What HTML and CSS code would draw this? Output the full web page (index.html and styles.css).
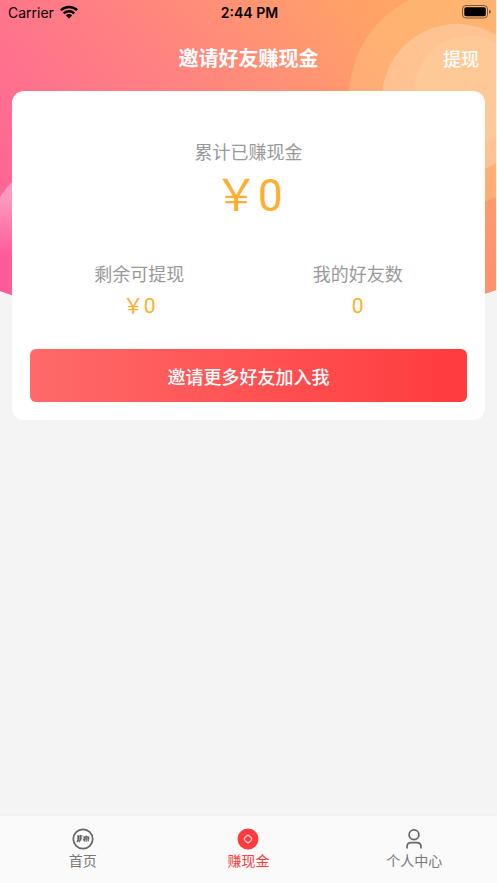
FILE: index.html
```html
<!DOCTYPE html>
<html lang="zh-CN">
<head>
<meta charset="utf-8">
<meta name="viewport" content="width=device-width, initial-scale=1">
<title>邀请好友赚现金</title>
<link rel="stylesheet" href="styles.css">
</head>
<body>
<div class="app">
  <svg class="backdrop" viewBox="0 0 497 340" preserveAspectRatio="none" aria-hidden="true">
    <defs>
      <linearGradient id="sky" gradientUnits="userSpaceOnUse" x1="30" y1="260" x2="370" y2="-10">
        <stop offset="0" stop-color="#ff6298"/>
        <stop offset="0.5" stop-color="#ff8182"/>
        <stop offset="1" stop-color="#ffa565"/>
      </linearGradient>
      <linearGradient id="dusk" gradientUnits="userSpaceOnUse" x1="0" y1="140" x2="0" y2="300">
        <stop offset="0" stop-color="#ff9270" stop-opacity="0"/>
        <stop offset="1" stop-color="#ff9270"/>
      </linearGradient>
      <linearGradient id="bubble" gradientUnits="userSpaceOnUse" x1="0" y1="175" x2="0" y2="255">
        <stop offset="0" stop-color="#ffa2c2"/>
        <stop offset="0.3" stop-color="#ff98bc"/>
        <stop offset="1" stop-color="#ff5b98"/>
      </linearGradient>
      <clipPath id="arch"><path d="M0 0H496V290Q248 380 0 291Z"/></clipPath>
    </defs>
    <g clip-path="url(#arch)">
      <rect width="496" height="340" fill="url(#sky)"/>
      <rect x="440" y="140" width="56" height="170" fill="url(#dusk)"/>
      <path d="M0 197Q18 170 42 164V320H0Z" fill="url(#bubble)"/>
      <circle cx="457" cy="97" r="108" fill="#ffc984" fill-opacity="0.4"/>
      <circle cx="457" cy="99" r="75" fill="#ffd6b8" fill-opacity="0.45"/>
      <circle cx="469" cy="90" r="54" fill="#ffd2a0" fill-opacity="0.4"/>
    </g>
  </svg>

  <div class="status">
    <div class="carrier">
      <span>Carrier</span>
      <svg width="18" height="14" viewBox="0 0 18 14" aria-hidden="true">
        <g fill="none" stroke="#000" stroke-width="2.5">
          <path d="M.9 5.2a11.7 11.7 0 0 1 16.2 0"/>
          <path d="M3.8 8.4a7.5 7.5 0 0 1 10.4 0"/>
        </g>
        <path d="M9 13.4 5.9 10.4a4.4 4.4 0 0 1 6.2 0Z"/>
      </svg>
    </div>
    <span class="clock">2:44 PM</span>
    <svg class="battery" width="29" height="14" viewBox="0 0 29 14" aria-hidden="true">
      <rect x=".5" y=".5" width="25" height="12.5" rx="3.5" fill="none" stroke="#000" stroke-opacity=".5"/>
      <rect x="2.3" y="2.3" width="21.5" height="9" rx="1.8"/>
      <path d="M27 4.8q2 .6 2 2t-2 2Z" fill-opacity=".5"/>
    </svg>
  </div>

  <header class="header">
    <h1 class="title">邀请好友赚现金</h1>
    <button class="withdraw" type="button">提现</button>
  </header>

  <main class="main">
    <section class="card">
      <div class="total">
        <span class="label">累计已赚现金</span>
        <span class="amount">￥0</span>
      </div>
      <div class="stats">
        <div class="stat">
          <span class="label">剩余可提现</span>
          <span class="value">￥0</span>
        </div>
        <div class="stat">
          <span class="label">我的好友数</span>
          <span class="value">0</span>
        </div>
      </div>
      <button class="invite" type="button">邀请更多好友加入我</button>
    </section>
  </main>

  <nav class="tabs">
    <a class="tab" href="#home">
      <svg width="22" height="22" viewBox="0 0 22 22" fill="none" stroke="#666" aria-hidden="true">
        <circle cx="11" cy="11" r="9.7" stroke-width="1.7"/>
        <path stroke-width="1.2" d="M5 8.2h5.4M5.2 10.1h4.6M5 12.2h4.2M6.4 7.2v4.6M8.6 7v4.4M6.6 11.4l-1.8 2.8M9.8 10l-3 4.2M11 9h6.4M11.4 11h5.8M14.2 7.4v6.4M13.4 8.4l-2.2 4M15 8.4l2.2 2.6M12.4 11.6v2M16.2 11.4v2.2"/>
      </svg>
      <span>首页</span>
    </a>
    <a class="tab active" href="#earn" aria-current="page">
      <svg width="22" height="22" viewBox="0 0 22 22" fill="none" aria-hidden="true">
        <circle cx="11" cy="11" r="10.5" fill="#ff3d40"/>
        <path d="M9.6 7.9 7.9 9.6q-1.3 1.4 0 2.8l1.7 1.7q1.4 1.3 2.8 0l1.7-1.7q1.3-1.4 0-2.8l-1.7-1.7q-1.4-1.3-2.8 0Z" stroke="#ffd0d0" stroke-width="1.3"/>
      </svg>
      <span>赚现金</span>
    </a>
    <a class="tab" href="#profile">
      <svg width="22" height="22" viewBox="0 0 22 22" fill="none" stroke="#666" stroke-width="1.7" aria-hidden="true">
        <circle cx="11" cy="6.8" r="4.9"/>
        <path d="M4 20.5v-1.7q0-4.2 4.2-4.2h5.6q4.2 0 4.2 4.2v1.7"/>
      </svg>
      <span>个人中心</span>
    </a>
  </nav>
</div>
</body>
</html>
```

FILE: styles.css
```css
* {
  box-sizing: border-box;
}

body {
  margin: 0;
  background: #f4f4f4;
  font-family: Inter, "Noto Sans CJK SC", sans-serif;
  color: #999;
}

button {
  border: 0;
  padding: 0;
  background: none;
  font: inherit;
  color: #fff;
}

.app {
  position: relative;
  display: flex;
  flex-direction: column;
  min-height: 100vh;
}

.backdrop {
  position: absolute;
  top: 0;
  left: 0;
  width: 100%;
  height: 340px;
}

.status,
.header,
.main,
.tabs {
  position: relative;
}

.status {
  display: grid;
  grid-template-columns: 1fr auto 1fr;
  align-items: center;
  height: 24px;
  padding: 0 6px 0 8px;
  font-size: 14px;
  color: #000;
}

.carrier {
  display: flex;
  align-items: center;
  gap: 6px;
}

.clock {
  font-weight: 600;
}

.battery {
  justify-self: end;
}

.header {
  display: grid;
  grid-template-columns: 1fr auto 1fr;
  align-items: center;
  height: 67px;
  padding: 0 18px;
}

.title {
  grid-column: 2;
  margin: 0;
  font-size: 20px;
  font-weight: 600;
  color: #fff;
}

.withdraw {
  justify-self: end;
  font-size: 18px;
  font-weight: 500;
}

.main {
  flex: 1;
  padding: 0 12px;
}

.card {
  padding: 49px 18px 18px;
  border-radius: 12px;
  background: #fff;
}

.total,
.stat {
  display: flex;
  flex-direction: column;
  align-items: center;
}

.label {
  font-size: 18px;
  line-height: 26px;
}

.amount,
.value {
  font-family: Roboto, "Noto Sans CJK SC", sans-serif;
  color: #ffaf2f;
}

.amount {
  font-size: 44px;
  line-height: 60px;
}

.stats {
  display: grid;
  grid-template-columns: 1fr 1fr;
  margin-top: 36px;
}

.stat {
  gap: 4px;
}

.value {
  font-size: 21px;
  line-height: 28px;
}

.invite {
  width: 100%;
  height: 53px;
  margin-top: 29px;
  border-radius: 6px;
  background: linear-gradient(90deg, #ff6a6a, #ff3b3d);
  font-size: 18px;
  font-weight: 500;
}

.tabs {
  display: grid;
  grid-template-columns: repeat(3, 1fr);
  height: 70px;
  border-top: 3px solid #f0f0f0;
  background: #fafafa;
}

.tab {
  display: flex;
  flex-direction: column;
  align-items: center;
  padding-top: 12px;
  font-size: 14px;
  line-height: 22px;
  color: #777;
  text-decoration: none;
}

.active {
  color: #ff3d40;
}
```
